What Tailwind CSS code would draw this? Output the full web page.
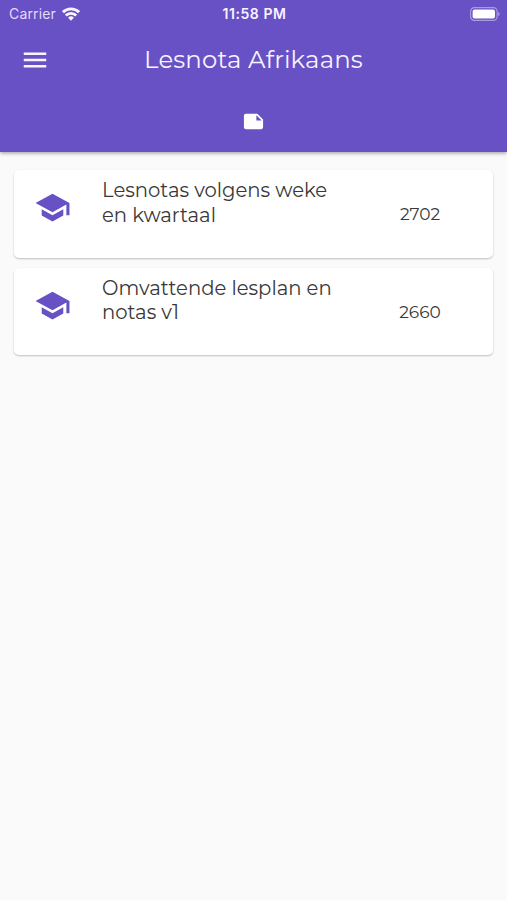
<!DOCTYPE html>
<html lang="af">
<head>
    <meta charset="UTF-8">
    <meta name="viewport" content="width=device-width, initial-scale=1.0">
    <title>Lesnota Afrikaans</title>
    <script src="https://cdn.jsdelivr.net/npm/@tailwindcss/browser@4"></script>
</head>
<body class="min-h-screen bg-[#fafafa] font-['Montserrat','Inter',sans-serif] text-[#383838]">
    <!-- App bar -->
    <header class="h-[152px] bg-[#6850c5] text-[#f7f3ff] shadow-[0_1px_4px_rgba(0,0,0,0.4)]">
        <!-- Status bar -->
        <div class="grid grid-cols-3 items-center h-[27px] pl-[9px] pr-[7px] font-['Inter',sans-serif]">
            <div class="flex items-center gap-[6px]">
                <span class="text-[14px] tracking-[0.15px] text-[#e4dcfa]">Carrier</span>
                <svg class="w-[18px] h-[14px]" viewBox="0 0 18 14" fill="none" stroke="currentColor" stroke-width="2.9">
                    <path d="M.9 5.2a11.5 11.5 0 0 1 16.2 0M3.8 8.5a7.4 7.4 0 0 1 10.4 0"/>
                    <path d="M9 13.7l-2.9-2.9a4.1 4.1 0 0 1 5.8 0z" fill="currentColor" stroke="none"/>
                </svg>
            </div>
            <span class="text-center text-[14px] font-semibold tracking-[0.55px]">11:58 PM</span>
            <svg class="justify-self-end w-[30px] h-[14px]" viewBox="0 0 30 14">
                <rect x=".6" y=".6" width="26.5" height="12.8" rx="3.8" fill="none" stroke="#a99be0" stroke-width="1.2"/>
                <rect x="2.6" y="2.4" width="22.4" height="9.2" rx="2" fill="#fff"/>
                <path d="M28.2 4.8c2 .8 2 3.6 0 4.4z" fill="#a99be0"/>
            </svg>
        </div>

        <!-- Toolbar -->
        <div class="grid grid-cols-[60px_1fr_60px] items-center h-[65px]">
            <button class="ml-5">
                <svg class="w-[30px] h-[30px]" viewBox="0 0 24 24" fill="currentColor">
                    <path d="M3 18h18v-2H3v2zm0-5h18v-2H3v2zm0-7v2h18V6H3z"/>
                </svg>
            </button>
            <h1 class="text-center text-[24.4px] tracking-[0.15px] whitespace-nowrap">Lesnota Afrikaans</h1>
        </div>

        <!-- Tab -->
        <div class="flex justify-center items-center h-[59px]">
            <svg class="w-[23px] h-[23px]" viewBox="0 0 24 24" fill="#fff">
                <path d="M22 10l-6-6H4c-1.1 0-2 .9-2 2v12.01c0 1.1.9 1.99 2 1.99l16-.01c1.1 0 2-.89 2-1.99v-8zm-7-4.5l5.5 5.5H15V5.5z"/>
            </svg>
        </div>
    </header>

    <!-- Lesson list -->
    <main class="flex flex-col gap-[10px] px-[14px] pt-[18px]">
        <div class="flex h-[87.5px] rounded-[5px] bg-white shadow-[0_1px_2px_rgba(0,0,0,0.24)]">
            <svg class="w-[37px] h-[37px] ml-[20px] mt-[19px] shrink-0" viewBox="0 0 24 24" fill="#6850c5">
                <path d="M5 13.18v4L12 21l7-3.82v-4L12 17l-7-3.82zM12 3L1 9l11 6 9-4.91V17h2V9L12 3z"/>
            </svg>
            <p class="w-[250px] ml-[31px] mt-[8px] text-[19.6px] leading-[24.5px]">
                Lesnotas volgens weke<br>en kwartaal
            </p>
            <span class="w-[136px] mt-[32px] text-center text-[17px] leading-[24px]">2702</span>
        </div>
        <div class="flex h-[87.5px] rounded-[5px] bg-white shadow-[0_1px_2px_rgba(0,0,0,0.24)]">
            <svg class="w-[37px] h-[37px] ml-[20px] mt-[19px] shrink-0" viewBox="0 0 24 24" fill="#6850c5">
                <path d="M5 13.18v4L12 21l7-3.82v-4L12 17l-7-3.82zM12 3L1 9l11 6 9-4.91V17h2V9L12 3z"/>
            </svg>
            <p class="w-[250px] ml-[31px] mt-[8px] text-[19.6px] leading-[24.5px]">
                Omvattende lesplan en<br>notas v1
            </p>
            <span class="w-[136px] mt-[32px] text-center text-[17px] leading-[24px]">2660</span>
        </div>
    </main>
</body>
</html>
